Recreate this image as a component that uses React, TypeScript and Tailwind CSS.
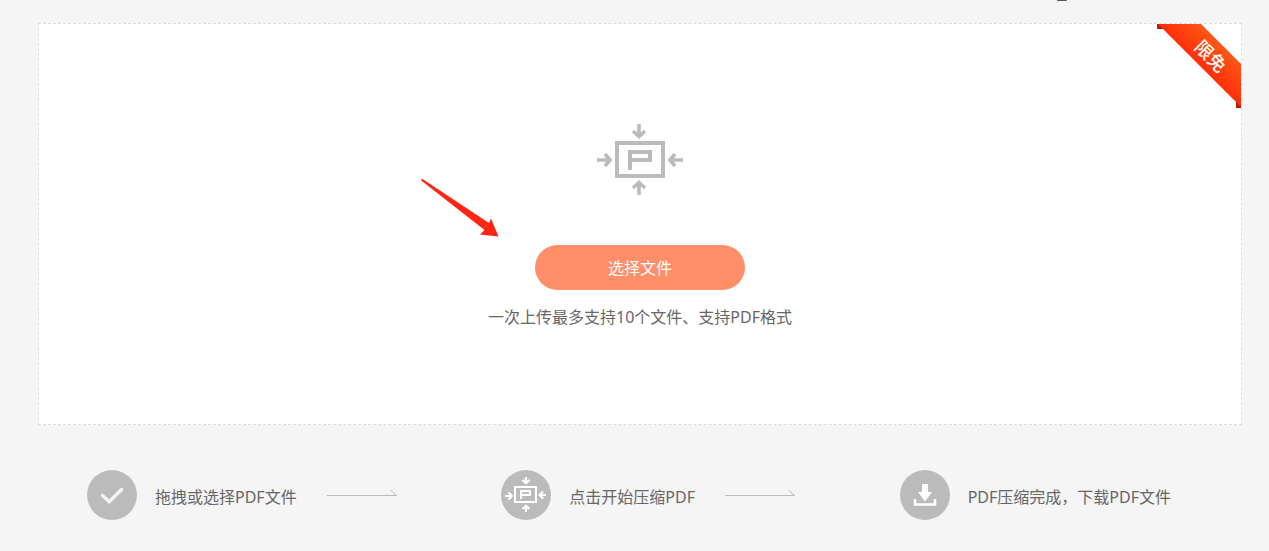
import React from 'react';

function CompressIcon() {
  return (
    <svg width="86" height="71" viewBox="0 0 86 71" fill="none" stroke="#bbbbbb" aria-hidden="true">
      <rect x="20" y="19" width="46" height="33" strokeWidth="4" />
      <path d="M33 46V28H53V36H35" strokeWidth="4" />
      <path
        strokeWidth="3.600"
        d="M42 0V12M36 7L42 12.500L48 7M42 71V59M36 64L42 58.500L48 64M0 36H12M8 30L13 36L8 42M86 36H74M78 30L73 36L78 42"
      />
    </svg>
  );
}

function CheckBadge() {
  return (
    <svg className="shrink-0" width="50" height="50" viewBox="0 0 50 50" fill="none" aria-hidden="true">
      <circle cx="25" cy="25" r="25" fill="#bbbbbb" />
      <path
        d="M15.500 25.500L22.300 31.700L34.500 19.500"
        stroke="#f5f5f5"
        strokeWidth="3.400"
        strokeLinecap="round"
      />
    </svg>
  );
}

function CompressBadge() {
  return (
    <svg className="shrink-0" width="50" height="50" viewBox="0 0 50 50" fill="none" stroke="#ffffff" aria-hidden="true">
      <circle cx="25" cy="25" r="25" fill="#bbbbbb" stroke="none" />
      <rect x="14" y="17" width="21" height="15" strokeWidth="2" />
      <path d="M20 29V21H29V25H20" strokeWidth="2" />
      <path
        strokeWidth="2.200"
        d="M25 7V13M21.500 10L25 13.200L28.500 10M25 42V36M21.500 39L25 35.800L28.500 39M4 26H10M7.500 22.500L10.800 26L7.500 29.500M45 25H39M42 21.500L38.700 25L42 28.500"
      />
    </svg>
  );
}

function DownloadBadge() {
  return (
    <svg className="shrink-0" width="50" height="50" viewBox="0 0 50 50" aria-hidden="true">
      <circle cx="25" cy="25" r="25" fill="#bbbbbb" />
      <path d="M22 14H28V22H32L25 31.500L18 22H22Z" fill="#ffffff" />
      <path d="M15 29V34.500H35V29" fill="none" stroke="#ffffff" strokeWidth="2.500" />
    </svg>
  );
}

function StepArrow() {
  return (
    <svg className="ml-[30px] shrink-0" width="71" height="12" viewBox="0 0 71 12" fill="none" stroke="#bbbbbb" aria-hidden="true">
      <path d="M0 6.500H70M63.500 1L69.500 6.500" />
    </svg>
  );
}

function Ribbon() {
  return (
    <svg className="absolute top-0 right-0" width="84" height="84" viewBox="0 0 84 84">
      <defs>
        <linearGradient id="ribbon" x1="42" y1="42" x2="62" y2="22" gradientUnits="userSpaceOnUse">
          <stop offset="0" stopColor="#ff2d0a" />
          <stop offset="1" stopColor="#ff5414" />
        </linearGradient>
      </defs>
      <path d="M0 0H8V5H0ZM79 76H84V84H79Z" fill="#b91c04" />
      <path d="M1 0H44L84 40V83Z" fill="url(#ribbon)" />
      <text
        x="54"
        y="32"
        transform="rotate(45 54 32)"
        textAnchor="middle"
        dominantBaseline="central"
        fontSize="18"
        fontWeight="500"
        fill="#ffffff"
      >
        限免
      </text>
    </svg>
  );
}

function Pointer() {
  return (
    <svg
      className="pointer-events-none absolute top-[154px] left-1/2 -ml-[220px]"
      width="80"
      height="62"
      viewBox="0 0 80 62"
      aria-hidden="true"
    >
      <path d="M1 1.500L2.500 1L69 45L71 40.500L78.500 58.500L60 56.500L64.500 52L1.500 2.800Z" fill="#ff2414" />
    </svg>
  );
}

const steps = [
  { label: '拖拽或选择PDF文件', Icon: CheckBadge },
  { label: '点击开始压缩PDF', Icon: CompressBadge },
  { label: 'PDF压缩完成，下载PDF文件', Icon: DownloadBadge },
];

export default function App() {
  return (
    <div className="min-h-screen bg-[#f5f5f5] pr-[27px] pl-[38px] font-['Noto_Sans','Noto_Sans_CJK_SC',sans-serif] text-base text-[#666666]">
      <header className="flex h-[23px] justify-end pr-[175px]">
        <div className="h-px w-[10px] rounded-b-sm bg-[#555555]" />
      </header>
      <main>
        <section className="relative flex h-[402px] flex-col items-center border border-dashed border-[#dddddd] bg-white pt-[100px]">
          <CompressIcon />
          <button
            type="button"
            className="mt-[50px] h-[45px] w-[210px] cursor-pointer rounded-full bg-[#ff8e69] text-white"
          >
            选择文件
          </button>
          <p className="mt-[15px] leading-6">一次上传最多支持10个文件、支持PDF格式</p>
          <Ribbon />
          <Pointer />
        </section>
        <ol className="mt-[45px] flex items-center justify-between pr-[71px] pl-[49px]">
          {steps.map(({ label, Icon }, index) => (
            <li key={label} className="flex items-center">
              <Icon />
              <span className="ml-[18px] pt-1 leading-6 whitespace-nowrap">{label}</span>
              {index < steps.length - 1 && <StepArrow />}
            </li>
          ))}
        </ol>
      </main>
    </div>
  );
}
